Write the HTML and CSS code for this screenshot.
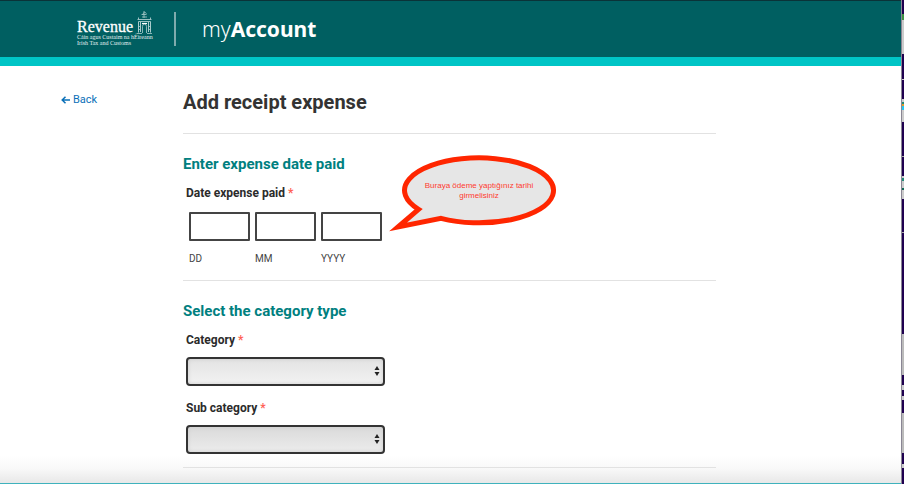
FILE: index.html
```html
<!DOCTYPE html>
<html lang="en">
<head>
<meta charset="utf-8">
<meta name="viewport" content="width=device-width, initial-scale=1">
<title>Add receipt expense</title>
<link rel="stylesheet" href="styles.css">
</head>
<body>
<div class="page">
  <header class="header">
    <div class="brand">
      <div class="brand-top">
        <span class="brand-name">Revenue</span>
        <svg class="crest" width="15" height="23" viewBox="0 0 15 23" fill="none" stroke="#a9cbcc" aria-hidden="true">
          <path d="M7 0v7M5.500 3.500L7.500 1l2 1.500M4.500 3.500h5M5 6h5" stroke-width=".8"/>
          <path d="M.5 8.500h14M1.500 10.500h12M1.500 6.500v2M13.500 6.500v2" stroke-width=".9"/>
          <path d="M1.500 10.500v11M3.500 11v10M11.500 11v10M13.500 10.500v11" stroke-width="1"/>
          <path d="M5.500 22v-6.500a2 2.500 0 0 1 4 0V22" stroke-width=".8"/>
          <path d="M5 12.500h5" stroke-width="1.200" stroke="#fff"/>
          <path d="M0 22.500h5M10 22.500h5M1 15.500h3M11 15.500h3M1 18.500h3M11 18.500h3" stroke-width=".8"/>
        </svg>
      </div>
      <span class="brand-line">Cáin agus Custaim na hÉireann</span>
      <span class="brand-line">Irish Tax and Customs</span>
    </div>
    <div class="product"><span class="product-my">my</span><b>Account</b></div>
  </header>
  <div class="content">
    <nav class="side">
      <a class="back" href="#">
        <svg width="9" height="8" viewBox="0 0 9 8" fill="none" stroke="currentColor" stroke-width="1.500" aria-hidden="true"><path d="M4.500.7L1.200 4l3.300 3.300M1.200 4H9"/></svg>
        Back
      </a>
    </nav>
    <main class="main">
      <h1>Add receipt expense</h1>
      <form>
        <section class="section">
          <h2>Enter expense date paid</h2>
          <fieldset class="field">
            <legend class="label">Date expense paid <span class="req">*</span></legend>
            <div class="dates">
              <div class="date"><input id="dd" type="text" inputmode="numeric"><label for="dd">DD</label></div>
              <div class="date"><input id="mm" type="text" inputmode="numeric"><label for="mm">MM</label></div>
              <div class="date"><input id="yyyy" type="text" inputmode="numeric"><label for="yyyy">YYYY</label></div>
            </div>
          </fieldset>
          <div class="callout">
            <svg width="170" height="80" viewBox="0 0 170 80" aria-hidden="true">
              <path d="M10 74L30.500 56.300A74.500 32.500 0 1 1 53 65.300Z" class="bubble"/>
            </svg>
            <p>Buraya ödeme yaptığınız tarihi girmelisiniz</p>
          </div>
        </section>
        <section class="section">
          <h2>Select the category type</h2>
          <div class="field">
            <label class="label" for="category">Category <span class="req">*</span></label>
            <div class="select"><select id="category"><option></option></select>
              <svg width="6" height="10" viewBox="0 0 6 10" aria-hidden="true"><path d="M3 0l2.500 4h-5zM3 10L.5 6h5z"/></svg></div>
          </div>
          <div class="field">
            <label class="label" for="subcategory">Sub category <span class="req">*</span></label>
            <div class="select muted"><select id="subcategory"><option></option></select>
              <svg width="6" height="10" viewBox="0 0 6 10" aria-hidden="true"><path d="M3 0l2.500 4h-5zM3 10L.5 6h5z"/></svg></div>
          </div>
        </section>
      </form>
    </main>
  </div>
</div>
<div class="edge"></div>
</body>
</html>
```
FILE: styles.css
```css
* { box-sizing: border-box; }

body {
  margin: 0;
  min-height: 100vh;
  display: flex;
  font-family: Roboto, "Noto Sans", sans-serif;
  font-size: 12px;
  color: #2b2b2b;
  background: #fff;
}

.page {
  flex: 1;
  display: flex;
  flex-direction: column;
  border-top: 1px solid #0a3338;
  border-bottom: 1px solid #3fb2bd;
}

.header {
  display: flex;
  align-items: center;
  height: 65px;
  padding: 0 77px;
  color: #fff;
  background: #005f61;
  border-bottom: 9px solid #00c5c6;
}

.brand {
  width: 99px;
  border-right: 2px solid #7fabad;
  height: 34px;
  display: flex;
  flex-direction: column;
  justify-content: flex-end;
  font-family: "Liberation Serif", serif;
}

.brand-top { display: flex; align-items: flex-end; gap: 4px; }
.brand-name { font-size: 16px; line-height: 15px; -webkit-text-stroke: 0.3px #fff; }
.brand-line { font-size: 6px; line-height: 6px; color: #e2eeee; white-space: nowrap; }
.crest { flex: none; }

.product {
  margin-left: 26px;
  font-family: "Noto Sans", sans-serif;
  font-size: 21px;
  line-height: 30px;
}
.product-my { font-weight: 300; }

.content {
  flex: 1;
  display: flex;
  padding: 24px 185px 15px 61px;
  background: linear-gradient(to top, #e8e8e8, #f8f8f8 14px, #fff 28px);
}

.side { width: 122px; padding-top: 2px; }
.back {
  display: inline-flex;
  align-items: center;
  gap: 3px;
  font-size: 11px;
  line-height: 16px;
  color: #0a70b8;
  text-decoration: none;
}

.main { flex: 1; }

h1 {
  margin: 0;
  padding-bottom: 18px;
  border-bottom: 1px solid #e2e2e2;
  font-size: 20px;
  line-height: 25px;
  font-weight: 700;
  color: #333;
}

.section {
  position: relative;
  padding-top: 20px;
  border-bottom: 1px solid #e2e2e2;
}

h2 {
  margin: 0 0 11px;
  font-size: 15px;
  line-height: 20px;
  font-weight: 700;
  color: #00807f;
}

.field { margin: 0; padding: 0 3px 13px; border: 0; }
.field + .field { margin-top: 1px; }
.label { display: block; padding: 0; font-size: 12px; line-height: 16px; font-weight: 700; }
.req { color: #ff6255; }

.dates { display: flex; gap: 5px; padding: 11px 3px 0; }
.date { display: flex; flex-direction: column; gap: 10px; }
.date input {
  width: 61px;
  height: 29px;
  padding: 0 6px;
  border: 2px solid #444;
  border-radius: 1px;
  background: #fff;
}
.date label { font-size: 10px; line-height: 16px; color: #444; }

.select { position: relative; width: 199px; margin-top: 9px; }
.select select {
  display: block;
  width: 100%;
  height: 29px;
  appearance: none;
  border: 2px solid #333;
  border-radius: 4px;
  background: linear-gradient(#e3e3e3, #f2f2f2);
  box-shadow: inset 0 0 4px #ccc;
}
.select.muted select { background: linear-gradient(#dadada, #ececec); }
.select svg { position: absolute; right: 5px; top: 9px; fill: #222; pointer-events: none; }

.callout { position: absolute; left: 205px; top: 19px; width: 170px; height: 80px; }
.callout svg { display: block; }
.bubble { fill: #e6e6e6; stroke: #ff2600; stroke-width: 5; stroke-miterlimit: 10; }
.callout p {
  position: absolute;
  left: 30px;
  top: 28px;
  width: 122px;
  margin: 0;
  font-family: "Liberation Sans", sans-serif;
  font-size: 8px;
  line-height: 10px;
  text-align: center;
  color: #ff3b30;
}

.edge {
  width: 3px;
  border-left: 1px solid #8a8694;
  background: linear-gradient(#1f0050 0 14px, #3e9142 14px 20px, #ccc 20px 54px,
    #1f0050 54px 79px, #ccc 79px 80px, #1f0050 80px 99px, #ccc 99px 102px,
    #287 102px 104px, #e39b25 104px 106px, #27c5ef 106px 110px, #ccc 110px 122px,
    #1f0050 122px 156px, #aaa 156px 157px, #1f0050 157px 176px, #ccc 176px 178px,
    #287 178px 181px, #ccc 181px 188px, #165 188px 190px, #ccc 190px 199px,
    #1f0050 199px 232px, #aaa 232px 233px, #1f0050 233px 334px, #bbb 334px 375px,
    #1f0050 375px 385px, #ccc 385px 390px, #1f0050 390px 396px, #ccc 396px 400px,
    #1f0050 400px 413px, #bbb 413px 453px, #1f0050 453px 464px, #ccc 464px 468px,
    #1f0050 468px);
}
```
